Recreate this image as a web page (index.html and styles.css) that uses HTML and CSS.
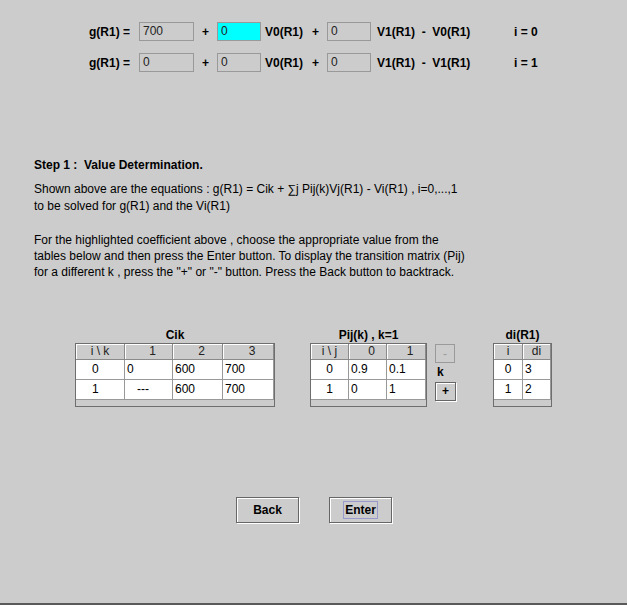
FILE: index.html
```html
<!DOCTYPE html>
<html>
<head>
<meta charset="utf-8">
<link rel="stylesheet" href="styles.css">
</head>
<body>
<div class="app">
  <div class="equations">
    <div class="eq">
      <span class="lbl">g(R1) =</span>
      <span class="field w55">700</span>
      <span class="op">+</span>
      <span class="field w44 hl">0</span>
      <span class="var">V0(R1)</span>
      <span class="op">+</span>
      <span class="field w44">0</span>
      <span class="rest">V1(R1)  -  V0(R1)</span>
      <span class="idx">i = 0</span>
    </div>
    <div class="eq">
      <span class="lbl">g(R1) =</span>
      <span class="field w55">0</span>
      <span class="op">+</span>
      <span class="field w44">0</span>
      <span class="var">V0(R1)</span>
      <span class="op">+</span>
      <span class="field w44">0</span>
      <span class="rest">V1(R1)  -  V1(R1)</span>
      <span class="idx">i = 1</span>
    </div>
  </div>

  <div class="desc">
    <h2 class="step">Step 1 :  Value Determination.</h2>
    <p class="p1">Shown above are the equations : g(R1) = Cik + ∑j Pij(k)Vj(R1) - Vi(R1) , i=0,...,1<br>to be solved for g(R1) and the Vi(R1)</p>
    <p class="p2">For the highlighted coefficient above , choose the appropriate value from the<br>tables below and then press the Enter button. To display the transition matrix (Pij)<br>for a different k , press the "+" or "-" button. Press the Back button to backtrack.</p>
  </div>

  <div class="tables">
    <div class="group cik">
      <div class="title">Cik</div>
      <div class="box">
        <div class="grid g-cik">
          <div class="hc">i \ k</div><div class="hc num">1</div><div class="hc num">2</div><div class="hc num">3</div>
          <div class="bc first-l">0</div><div class="bc">0</div><div class="bc">600</div><div class="bc">700</div>
          <div class="bc first-l">1</div><div class="bc dash">---</div><div class="bc">600</div><div class="bc">700</div>
        </div>
        <div class="strip"></div>
      </div>
    </div>

    <div class="group pij">
      <div class="title">Pij(k) , k=1</div>
      <div class="box">
        <div class="grid g-pij">
          <div class="hc">i \ j</div><div class="hc num">0</div><div class="hc num">1</div>
          <div class="bc first-c">0</div><div class="bc">0.9</div><div class="bc">0.1</div>
          <div class="bc first-c">1</div><div class="bc">0</div><div class="bc">1</div>
        </div>
        <div class="strip"></div>
      </div>
    </div>

    <div class="kcol">
      <div class="kbtn disabled">-</div>
      <div class="klabel">k</div>
      <div class="kbtn plus">+</div>
    </div>

    <div class="group di">
      <div class="title">di(R1)</div>
      <div class="box">
        <div class="grid g-di">
          <div class="hc">i</div><div class="hc">di</div>
          <div class="bc first-c">0</div><div class="bc">3</div>
          <div class="bc first-c">1</div><div class="bc">2</div>
        </div>
        <div class="strip"></div>
      </div>
    </div>
  </div>

  <div class="actions">
    <div class="btn">Back</div>
    <div class="btn"><span class="focus">Enter</span></div>
  </div>
</div>
</body>
</html>
```

FILE: styles.css
```css
body {
  margin: 0;
}

.app {
  width: 627px;
  height: 605px;
  box-sizing: border-box;
  background: #cccccc;
  border-bottom: 2px solid #5a5a5a;
  overflow: hidden;
  font-family: "Liberation Sans", Arial, sans-serif;
  font-size: 12px;
  color: #000;
}

/* equations */
.equations {
  padding: 22px 0 0 89px;
  display: flex;
  flex-direction: column;
  gap: 12px;
}

.eq {
  display: flex;
  align-items: center;
  height: 19px;
  font-weight: bold;
}

.lbl {
  width: 50px;
}

.field {
  box-sizing: border-box;
  height: 19px;
  border: 1px solid #999999;
  padding-left: 3px;
  font-weight: normal;
  line-height: 17px;
  color: #222;
}

.w55 { width: 55px; }
.w44 { width: 44px; }
.hl { background: #00ffff; }

.op {
  width: 23px;
  text-align: center;
}

.var {
  width: 43px;
  padding-left: 4px;
  box-sizing: border-box;
}

.rest {
  width: 143px;
  padding-left: 6px;
  box-sizing: border-box;
  white-space: pre;
}

/* description */
.desc {
  padding-left: 34px;
  margin-top: 85px;
}

.step {
  margin: 0;
  font-size: 12px;
  font-weight: bold;
  line-height: 16px;
  white-space: pre;
}

.p1 {
  margin: 8px 0 0;
  line-height: 17px;
}

.p2 {
  margin: 17px 0 0;
  line-height: 16px;
}

/* tables */
.tables {
  display: flex;
  align-items: flex-start;
  margin-top: 48px;
  padding-left: 75px;
}

.title {
  text-align: center;
  font-weight: bold;
  line-height: 15px;
  height: 15px;
}

.cik { width: 200px; margin-right: 35px; }
.pij { width: 117px; margin-right: 8px; }
.di { width: 59px; }

.box {
  box-sizing: border-box;
  border: 1px solid #6e6e6e;
  background: #cccccc;
}

.grid {
  display: grid;
}

.g-cik { grid-template-columns: 49px 48px 50px 51px; }
.g-pij { grid-template-columns: 38px 38px 39px; }
.g-di { grid-template-columns: 29px 28px; }

.hc {
  height: 16px;
  box-sizing: border-box;
  border-right: 1px solid #8a8a8a;
  border-bottom: 1px solid #8a8a8a;
  background: #cccccc;
  box-shadow: inset 1px 1px #ffffff;
  text-align: center;
  line-height: 15px;
  color: #222;
  white-space: pre;
}

.hc.num {
  padding-left: 8px;
}

.bc {
  height: 20px;
  box-sizing: border-box;
  border-right: 1px solid #999999;
  border-bottom: 1px solid #999999;
  background: #ffffff;
  line-height: 19px;
  padding-left: 2px;
}

.bc.first-l {
  padding-left: 16px;
}

.bc.first-c {
  padding-left: 0;
  text-align: center;
}

.bc.dash {
  padding-left: 12px;
}

.strip {
  height: 6px;
  background: #cccccc;
}

/* k buttons */
.kcol {
  width: 22px;
  margin-right: 36px;
  padding-top: 16px;
  display: flex;
  flex-direction: column;
}

.kbtn {
  box-sizing: border-box;
  height: 19px;
  border: 1px solid #666666;
  box-shadow: inset 1px 1px #ffffff, 1px 1px #ffffff;
  text-align: center;
  font-weight: bold;
  line-height: 17px;
}

.kbtn.disabled {
  width: 20px;
  border-color: #9a9a9a;
  box-shadow: none;
  color: #9a9a9a;
  font-weight: normal;
  line-height: 19px;
}

.kbtn.plus {
  width: 21px;
}

.klabel {
  height: 19px;
  line-height: 19px;
  padding-left: 2px;
  font-weight: bold;
}

/* bottom buttons */
.actions {
  display: flex;
  gap: 30px;
  padding-left: 236px;
  margin-top: 90px;
}

.btn {
  width: 63px;
  height: 26px;
  box-sizing: border-box;
  border: 1px solid #666666;
  box-shadow: inset 1px 1px #ffffff, 1px 1px #ffffff;
  background: #cccccc;
  font-weight: bold;
  display: flex;
  align-items: center;
  justify-content: center;
}

.focus {
  border: 1px solid #9999cc;
  line-height: 16px;
  padding: 0 1px;
}
```
